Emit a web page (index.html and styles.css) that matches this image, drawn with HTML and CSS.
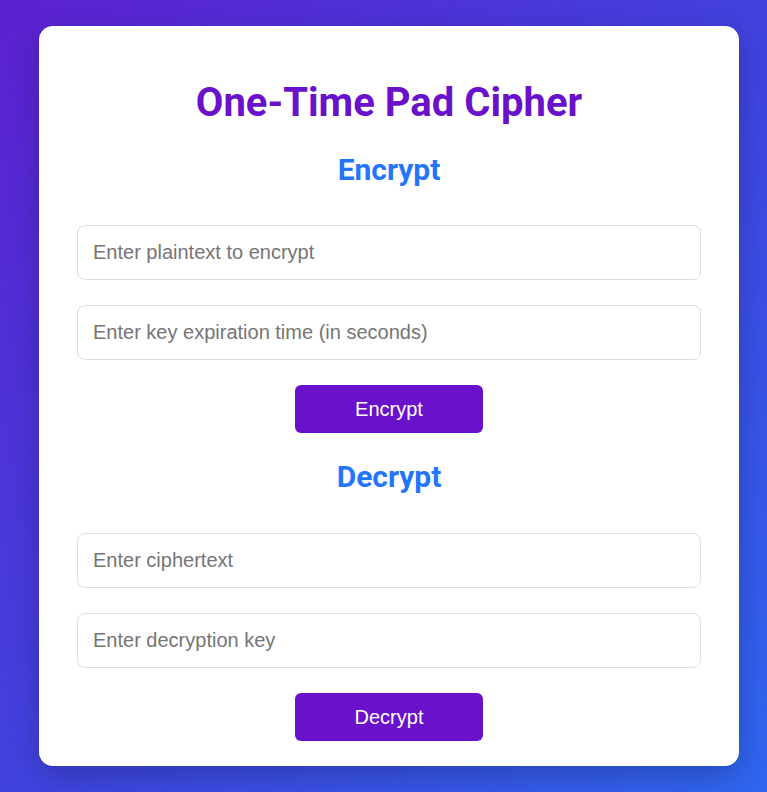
FILE: index.html
```html
<!DOCTYPE html>
<html>
<head>
<meta charset="utf-8">
<link rel="stylesheet" href="styles.css">
</head>
<body>
<div class="card">
  <h1 class="title">One-Time Pad Cipher</h1>
  <h2 class="section">Encrypt</h2>
  <input class="field" type="text" placeholder="Enter plaintext to encrypt">
  <input class="field" type="text" placeholder="Enter key expiration time (in seconds)">
  <button class="btn">Encrypt</button>
  <h2 class="section section-b">Decrypt</h2>
  <input class="field" type="text" placeholder="Enter ciphertext">
  <input class="field" type="text" placeholder="Enter decryption key">
  <button class="btn">Decrypt</button>
</div>
</body>
</html>
```
FILE: styles.css
```css
html, body {
  margin: 0;
  height: 100%;
}
body {
  background: linear-gradient(135deg, #5c20d0 0%, #3f45e0 55%, #2f66f0 100%);
  font-family: "Liberation Sans", Arial, sans-serif;
  padding: 26px 28px 26px 39px;
  box-sizing: border-box;
  overflow: hidden;
}
.card {
  width: 700px;
  height: 740px;
  box-sizing: border-box;
  background: #fff;
  border-radius: 14px;
  box-shadow: 0 10px 30px rgba(0, 0, 0, 0.22);
  padding: 53px 38px 25px 38px;
  display: flex;
  flex-direction: column;
  align-items: center;
}
.title {
  margin: 0;
  font-family: Roboto, sans-serif;
  font-weight: 700;
  font-size: 40px;
  line-height: 48px;
  color: #6a11cb;
}
.section {
  margin: 26px 0 38px;
  font-family: Roboto, sans-serif;
  font-weight: 700;
  font-size: 30px;
  line-height: 34px;
  color: #2575fc;
}
.section-b {
  margin-top: 27px;
  margin-bottom: 39px;
}
.field {
  width: 100%;
  height: 55px;
  box-sizing: border-box;
  border: 1px solid #ddd;
  border-radius: 8px;
  padding: 0 15px;
  font-family: "Liberation Sans", Arial, sans-serif;
  font-size: 20px;
  margin: 0 0 25px;
  outline: none;
}
.field::placeholder {
  color: #757575;
}
.btn {
  width: 188px;
  height: 48px;
  border: none;
  border-radius: 6px;
  background: #6a11cb;
  color: #fff;
  font-family: "Liberation Sans", Arial, sans-serif;
  font-size: 20px;
  cursor: pointer;
}
```
